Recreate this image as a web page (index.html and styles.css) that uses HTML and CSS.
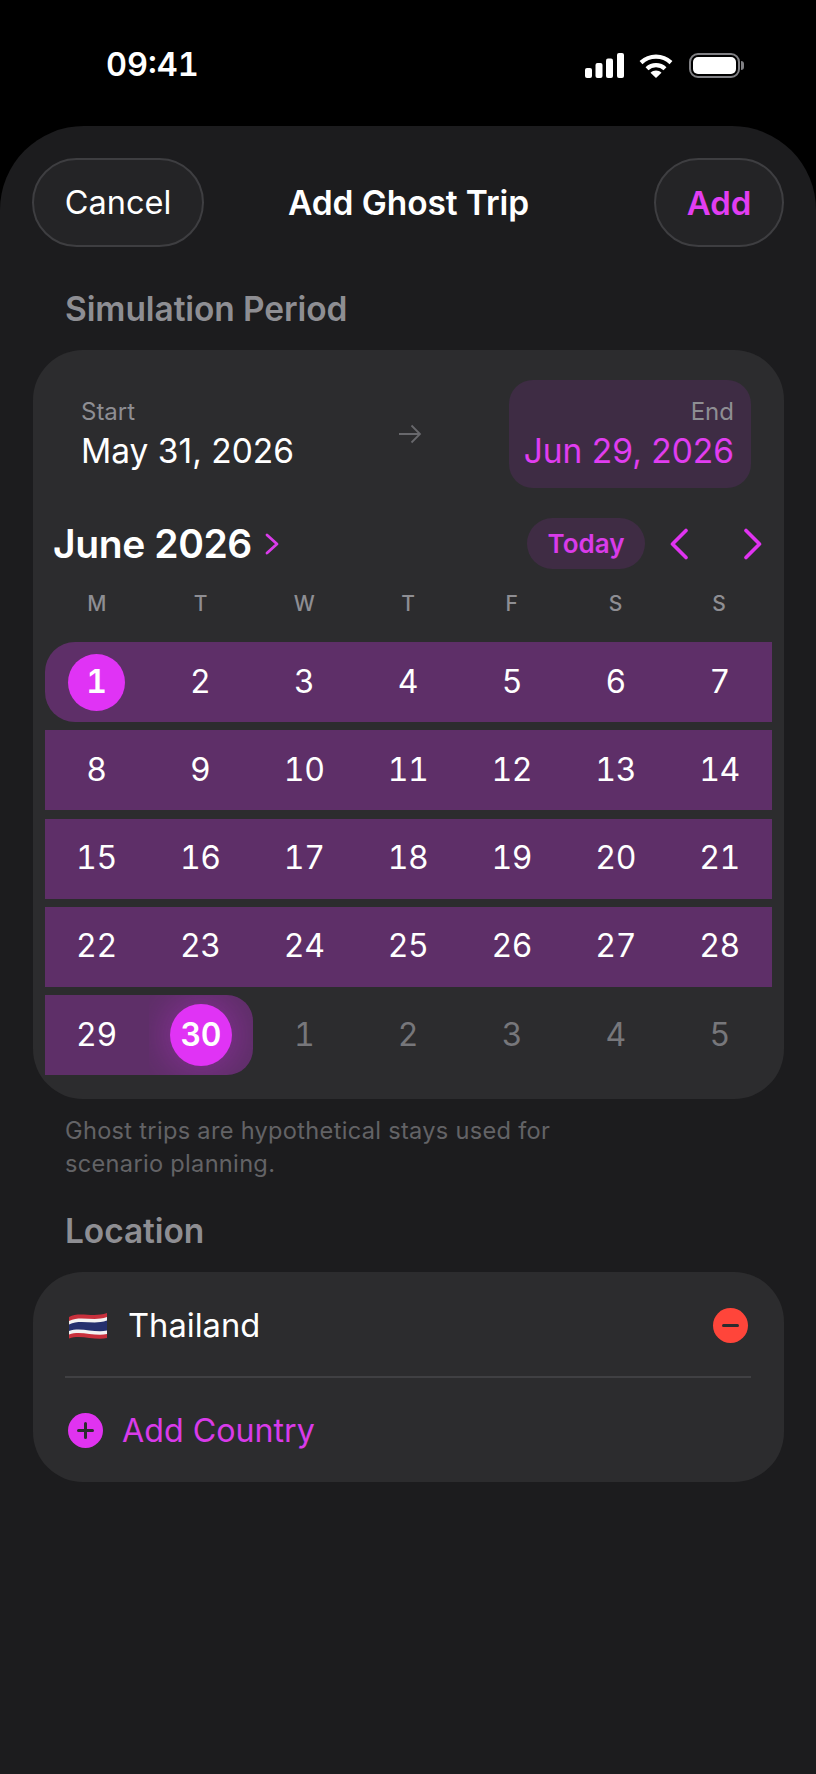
FILE: index.html
```html
<!DOCTYPE html>
<html lang="en">
<head>
<meta charset="utf-8">
<title>Add Ghost Trip</title>
<link rel="stylesheet" href="styles.css">
</head>
<body>
<div class="screen">
  <header class="status">
    <span class="time">09:41</span>
    <div class="status-icons">
      <svg class="signal" width="39" height="25" viewBox="0 0 39 25"><rect x="0" y="15" width="7" height="10" rx="2"/><rect x="10.5" y="10" width="7" height="15" rx="2"/><rect x="21" y="5.5" width="7" height="19.5" rx="2"/><rect x="32" y="0" width="7" height="25" rx="2"/></svg>
      <svg class="wifi" width="34" height="24" viewBox="0 0 34 24"><path d="M2 8.6C10.5 .6 23.500 .6 32 8.6" fill="none" stroke="#fff" stroke-width="4.200"/><path d="M8 14.800C13 10 21 10 26 14.800" fill="none" stroke="#fff" stroke-width="4.200"/><path d="M11.500 18.800C14.500 15.800 19.500 15.800 22.500 18.800L17 24Z" fill="#fff"/></svg>
      <div class="battery"><div class="battery-body"><div class="battery-fill"></div></div><div class="battery-cap"></div></div>
    </div>
  </header>

  <main class="sheet">
    <nav class="nav">
      <button class="pill pill-cancel">Cancel</button>
      <h1 class="title">Add Ghost Trip</h1>
      <button class="pill pill-add">Add</button>
    </nav>

    <h2 class="section section-period">Simulation Period</h2>

    <section class="card calendar">
      <div class="dates">
        <div class="date">
          <span class="date-label">Start</span>
          <span class="date-value">May 31, 2026</span>
        </div>
        <svg class="arrow" width="24" height="20" viewBox="0 0 24 20"><path d="M1 10H22M13.500 1.500L22 10L13.500 18.500" fill="none" stroke="#68686c" stroke-width="1.800"/></svg>
        <div class="date date-end">
          <span class="date-label">End</span>
          <span class="date-value">Jun 29, 2026</span>
        </div>
      </div>

      <div class="month-row">
        <div class="month">
          <span class="month-name">June 2026</span>
          <svg width="14" height="22" viewBox="0 0 14 22"><path d="M2 2L12 11L2 20" fill="none" stroke="#d93be9" stroke-width="2.800" stroke-linecap="round" stroke-linejoin="round"/></svg>
        </div>
        <div class="month-actions">
          <span class="today">Today</span>
          <svg class="chev-prev" width="20" height="32" viewBox="0 0 20 32"><path d="M17 2.500L3.500 16L17 29.500" fill="none" stroke="#e033f0" stroke-width="3.600" stroke-linecap="round" stroke-linejoin="round"/></svg>
          <svg class="chev-next" width="20" height="32" viewBox="0 0 20 32"><path d="M3 2.500L16.500 16L3 29.500" fill="none" stroke="#e033f0" stroke-width="3.600" stroke-linecap="round" stroke-linejoin="round"/></svg>
        </div>
      </div>

      <div class="weekdays">
        <span>M</span><span>T</span><span>W</span><span>T</span><span>F</span><span>S</span><span>S</span>
      </div>

      <div class="weeks">
        <div class="day range first"><span class="circle">1</span></div>
        <div class="day range">2</div><div class="day range">3</div><div class="day range">4</div><div class="day range">5</div><div class="day range">6</div><div class="day range">7</div>
        <div class="day range">8</div><div class="day range">9</div><div class="day range">10</div><div class="day range">11</div><div class="day range">12</div><div class="day range">13</div><div class="day range">14</div>
        <div class="day range">15</div><div class="day range">16</div><div class="day range">17</div><div class="day range">18</div><div class="day range">19</div><div class="day range">20</div><div class="day range">21</div>
        <div class="day range">22</div><div class="day range">23</div><div class="day range">24</div><div class="day range">25</div><div class="day range">26</div><div class="day range">27</div><div class="day range">28</div>
        <div class="day range">29</div>
        <div class="day range last"><span class="circle circle-end">30</span></div>
        <div class="day muted">1</div><div class="day muted">2</div><div class="day muted">3</div><div class="day muted">4</div><div class="day muted">5</div>
      </div>
    </section>

    <p class="hint">Ghost trips are hypothetical stays used for<br>scenario planning.</p>

    <h2 class="section section-location">Location</h2>

    <section class="card locations">
      <div class="loc-row loc-country">
        <svg class="flag" width="38" height="27" viewBox="0 0 38 27">
          <path d="M0 5C10 -1 24 6 38 1V26C26 29 12 22 0 26.500Z" fill="#c8303c"/>
          <path d="M0 9C12 3 24 10 38 5V22C26 25 12 18 0 22.500Z" fill="#f2f2f2"/>
          <path d="M0 12.500C12 6.500 24 13.500 38 8.500V18.500C26 21.500 12 14.500 0 19Z" fill="#25306e"/>
        </svg>
        <span class="loc-name">Thailand</span>
        <span class="minus"><span class="minus-bar"></span></span>
      </div>
      <div class="divider"></div>
      <div class="loc-row loc-add">
        <svg class="plus" width="35" height="35" viewBox="0 0 35 35"><circle cx="17.500" cy="17.500" r="17.500" fill="#e033f0"/><path d="M17.500 10.500V24.500M10.500 17.500H24.500" stroke="#2c2c2e" stroke-width="3" stroke-linecap="round"/></svg>
        <span class="loc-add-text">Add Country</span>
      </div>
    </section>
  </main>
</div>
</body>
</html>
```
FILE: styles.css
```css
* { box-sizing: border-box; margin: 0; padding: 0; }
html, body { background: #000; }
body { font-family: Inter, "Liberation Sans", sans-serif; color: #fff; }
.screen { width: 816px; height: 1774px; display: flex; flex-direction: column; overflow: hidden; }

.status { height: 126px; flex: none; display: flex; justify-content: space-between; align-items: flex-start; padding: 46px 72px 0 106px; }
.time { font-size: 32.500px; font-weight: 600; line-height: 38px; letter-spacing: 0; font-variant-numeric: tabular-nums; }
.status-icons { display: flex; align-items: center; gap: 15px; padding-top: 7px; }
.signal { fill: #fff; display: block; }
.wifi { display: block; }
.battery { display: flex; align-items: center; gap: 1px; margin-left: 1px; }
.battery-body { width: 51px; height: 25px; border: 2.500px solid #808084; border-radius: 9px; padding: 2px; }
.battery-fill { width: 100%; height: 100%; background: #fff; border-radius: 5px; }
.battery-cap { width: 3px; height: 9px; background: #808084; border-radius: 0 3px 3px 0; }

.sheet { flex: 1; background: #1c1c1e; border-radius: 84px 84px 0 0; padding: 32px 32px 0 33px; }
.nav { display: grid; grid-template-columns: 1fr auto 1fr; align-items: center; }
.pill { height: 89px; border-radius: 44.5px; background: #242426; border: 2px solid #3e3e41; font: inherit; font-size: 32.500px; color: #fff; }
.pill-cancel { width: 172px; justify-self: start; margin-left: -1px; }
.pill-add { width: 130px; justify-self: end; color: #e23df2; font-size: 33px; font-weight: 600; }
.title { font-size: 33.500px; font-weight: 600; letter-spacing: -0.1px; }

.section { font-size: 33.500px; font-weight: 600; color: #8e8e93; line-height: 40px; padding-left: 32px; letter-spacing: -0.1px; }
.section-period { margin-top: 42px; }
.section-location { margin-top: 31px; }

.card { background: #2c2c2e; border-radius: 50px; width: 751px; }
.calendar { margin-top: 21px; padding: 30px 12px 24px; }

.dates { display: flex; align-items: center; justify-content: space-between; margin: 0 21px 0 36px; height: 108px; }
.date { display: flex; flex-direction: column; gap: 4px; }
.date-label { font-size: 24px; line-height: 30px; color: #8e8e93; }
.date-value { font-size: 33.500px; line-height: 41px; color: #fff; }
.date-end { width: 242px; height: 108px; background: #3e2c44; border-radius: 24px; align-items: flex-end; justify-content: center; padding-right: 17px; }
.date-end .date-value { color: #e03df0; }
.arrow { margin-left: 17px; }

.month-row { display: flex; align-items: center; justify-content: space-between; margin-top: 30px; height: 51px; padding: 0 9px 0 8px; }
.month { display: flex; align-items: center; gap: 13px; }
.month-name { font-size: 39px; font-weight: 600; letter-spacing: -0.4px; }
.month-actions { display: flex; align-items: center; }
.today { width: 118px; height: 51px; border-radius: 25.500px; background: #3f2c44; color: #d93be9; font-size: 26px; font-weight: 600; display: flex; align-items: center; justify-content: center; }
.chev-prev { margin-left: 24px; }
.chev-next { margin-left: 54px; }

.weekdays, .weeks { display: grid; grid-template-columns: repeat(7, 1fr); }
.weekdays { margin-top: 20px; height: 28px; align-items: center; text-align: center; font-size: 21px; font-weight: 500; color: #8e8e93; padding-right: 1px; }
.weeks { margin-top: 25px; grid-auto-rows: 80px; row-gap: 8.250px; }
.day { display: flex; align-items: center; justify-content: center; font-size: 32px; letter-spacing: -0.4px; font-variant-numeric: tabular-nums; padding: 0 1px 2px 0; }
.range { background: #5e2f68; }
.first { border-radius: 30px 0 0 30px; padding: 0 1px 0 0; }
.last { border-radius: 0 26px 26px 0; overflow: hidden; padding: 0 0 0 0; }
.muted { color: #77777b; }
.circle { width: 57px; height: 57px; border-radius: 50%; background: #e033f5; display: flex; align-items: center; justify-content: center; font-weight: 600; padding-bottom: 2px; }
.circle-end { width: 62px; height: 62px; box-shadow: 0 0 34px 6px rgba(224, 51, 245, 0.28); }

.hint { margin-top: 16px; padding-left: 32px; font-size: 23.600px; line-height: 32.500px; color: #636366; letter-spacing: 0.3px; }

.locations { margin-top: 21px; padding: 0 33px 0 32px; }
.loc-row { display: flex; align-items: center; }
.loc-country { height: 104px; padding-top: 2px; }
.flag { margin-left: 4px; }
.loc-name { margin-left: 21px; font-size: 32.700px; flex: 1; }
.minus { width: 35px; height: 35px; border-radius: 50%; background: #ff453a; display: flex; align-items: center; justify-content: center; margin-right: 3px; }
.minus-bar { width: 17px; height: 3px; border-radius: 2px; background: #2c2c2e; }
.divider { height: 2px; background: #404043; }
.loc-add { height: 104px; }
.plus { margin-left: 3px; }
.loc-add-text { margin-left: 19px; font-size: 32.200px; color: #d93be9; }
```
